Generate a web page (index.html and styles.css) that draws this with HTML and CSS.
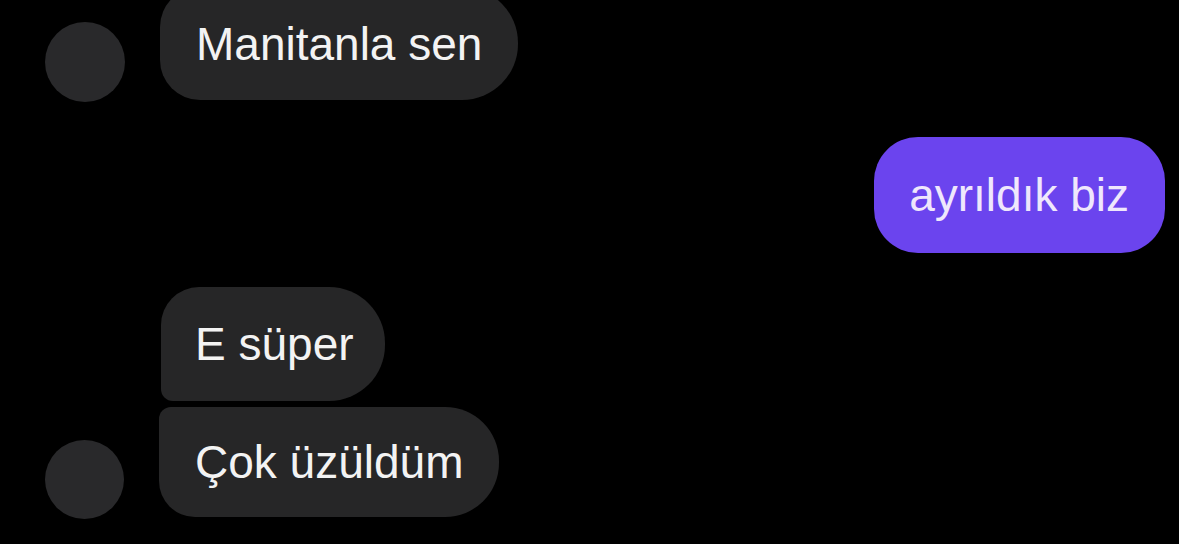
FILE: index.html
```html
<!DOCTYPE html>
<html lang="tr">
<head>
<meta charset="utf-8">
<title>Sohbet</title>
<link rel="stylesheet" href="styles.css">
</head>
<body>
<div class="chat">
  <div class="group group-first">
    <div class="avatar"></div>
    <div class="stack">
      <div class="bubble in single-last">Manitanla sen</div>
    </div>
  </div>

  <div class="out-row">
    <div class="bubble out">ayrıldık biz</div>
  </div>

  <div class="group group-second">
    <div class="avatar"></div>
    <div class="stack">
      <div class="bubble in first">E süper</div>
      <div class="bubble in last">Çok üzüldüm</div>
    </div>
  </div>
</div>
</body>
</html>
```

FILE: styles.css
```css
html, body {
  margin: 0;
  padding: 0;
  background: #000;
  height: 100%;
  overflow: hidden;
}

body {
  font-family: "Liberation Sans", Arial, sans-serif;
  font-size: 46px;
  color: #f3f3f3;
}

.chat {
  display: flex;
  flex-direction: column;
  padding: 0 14px 0 45px;
}

.group {
  display: flex;
  align-items: flex-end;
  gap: 35px;
}

.group-first {
  margin-top: -13px;
}

.group-second {
  margin-top: 34px;
}

.avatar {
  width: 80px;
  height: 80px;
  border-radius: 50%;
  background: #29292b;
  flex: none;
  margin-bottom: -2px;
}

.group-second .avatar {
  width: 79px;
  height: 79px;
}

.stack {
  display: flex;
  flex-direction: column;
  align-items: flex-start;
  gap: 6px;
}

.bubble {
  display: flex;
  align-items: center;
  padding: 0 36px;
  white-space: nowrap;
}

.bubble.in {
  background: #262627;
  height: 113px;
}

.bubble.single-last {
  border-radius: 40px 56px 56px 40px;
}

.bubble.first {
  height: 114px;
  border-radius: 38px 56px 56px 12px;
  padding: 0 31px 0 34px;
  margin-left: 2px;
}

.bubble.last {
  height: 110px;
  border-radius: 12px 54px 54px 36px;
  padding: 0 36px 0 36px;
}

.out-row {
  display: flex;
  justify-content: flex-end;
  margin-top: 37px;
}

.bubble.out {
  background: #6b44ee;
  color: #efe7fc;
  height: 116px;
  border-radius: 44px;
  padding: 0 36px 0 35px;
}
```
